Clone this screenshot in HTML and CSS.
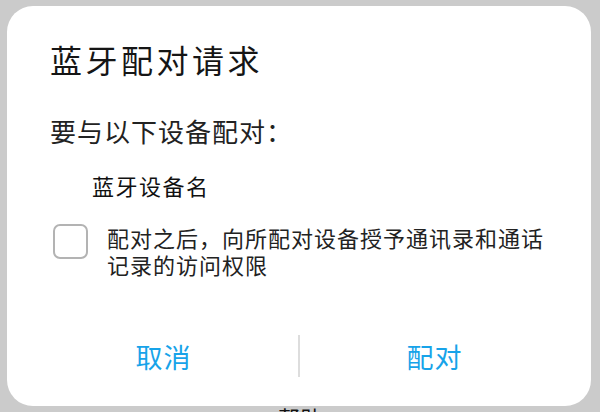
FILE: index.html
```html
<!DOCTYPE html>
<html lang="zh-CN">
<head>
    <meta charset="UTF-8">
    <meta name="viewport" content="width=device-width, initial-scale=1.0">
    <title>蓝牙配对请求</title>
    <link rel="stylesheet" href="styles.css">
</head>
<body>
    <div class="dialog">
        <h1 class="dialog-title">蓝牙配对请求</h1>
        <p class="prompt">要与以下设备配对：</p>
        <p class="device-name">蓝牙设备名</p>

        <label class="share-row">
            <input type="checkbox" class="share-check">
            <span class="share-text">配对之后，向所配对设备授予通讯录和通话记录的访问权限</span>
        </label>

        <div class="actions">
            <button class="action-btn">取消</button>
            <span class="divider"></span>
            <button class="action-btn">配对</button>
        </div>
    </div>

    <div class="under">帮助</div>
</body>
</html>
```

FILE: styles.css
```css
:root {
    --bg-page: #cbcbcb;
    --bg-dialog: #ffffff;
    --text-primary: #151515;
    --text-body: #222222;
    --accent: #17a3e9;
    --line: #dddddd;
}

body {
    font-family: "Noto Sans CJK SC", "Noto Sans", sans-serif;
    background-color: var(--bg-page);
    color: var(--text-primary);
    margin: 0;
    padding: 6px 9px 0 7px;
    height: 412px;
    box-sizing: border-box;
    overflow: hidden;
}

.dialog {
    display: flex;
    flex-direction: column;
    width: 584px;
    height: 400px;
    box-sizing: border-box;
    padding: 33px 22px 29px 43px;
    background-color: var(--bg-dialog);
    border-radius: 26px;
}

.dialog-title {
    margin: 0;
    font-size: 32px;
    font-weight: normal;
    line-height: 40px;
    letter-spacing: 3.5px;
}

.prompt {
    margin: 36px 0 0;
    font-size: 26px;
    line-height: 32px;
    letter-spacing: 1px;
    color: var(--text-body);
}

.device-name {
    margin: 24px 0 0 42px;
    font-size: 22px;
    line-height: 28px;
    letter-spacing: 1.5px;
    color: #111;
}

.share-row {
    display: flex;
    align-items: flex-start;
    gap: 19px;
    margin-top: 25px;
    padding-left: 3px;
}

.share-check {
    appearance: none;
    flex-shrink: 0;
    width: 35px;
    height: 35px;
    margin: 0;
    border: 2px solid #b3b3b3;
    border-radius: 7px;
    box-sizing: border-box;
    background: #fff;
}

.share-text {
    font-size: 22px;
    line-height: 27px;
    letter-spacing: 1px;
    color: var(--text-body);
    padding-right: 20px;
}

.actions {
    display: flex;
    align-items: center;
    height: 42px;
    margin-top: auto;
    margin-left: -21px;
}

.action-btn {
    flex: 1;
    height: 42px;
    padding: 0;
    border: none;
    background: none;
    font-family: inherit;
    font-size: 27px;
    letter-spacing: 1px;
    color: var(--accent);
    cursor: pointer;
}

.divider {
    width: 2px;
    height: 42px;
    background-color: var(--line);
}

.under {
    text-align: center;
    font-size: 22px;
    line-height: 22px;
    padding-left: 2px;
    color: #111;
}
```
